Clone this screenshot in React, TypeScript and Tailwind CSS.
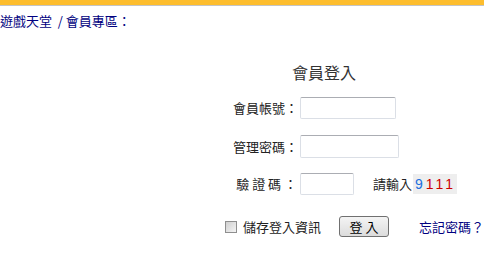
import React from "react";

const inputCls =
  "h-[22px] border border-[#dbdfe6] border-t-[#abadb3] rounded-[2px] bg-white";

export default function App() {
  return (
    <div className="w-[484px] h-[267px] bg-white overflow-hidden font-['Noto_Sans_CJK_TC','Noto_Sans_CJK_SC',sans-serif] text-[13px] text-[#222]">
      <div className="h-[5px] bg-[#fdbd2d]" />
      <div className="h-px bg-[#c4c4c4]" />
      <div className="mt-[7px] leading-[16px] text-[#000080] whitespace-pre">遊戲天堂  / 會員專區：</div>

      <div className="mt-[33px] ml-[292px] text-[16px] leading-[20px] text-[#333]">會員登入</div>

      <div className="mt-[15px] flex items-center">
        <div className="w-[298px] text-right leading-[16px]">會員帳號：</div>
        <div className={`ml-[2px] w-[96px] ${inputCls}`} />
      </div>

      <div className="mt-[16px] flex items-center">
        <div className="w-[298px] text-right leading-[16px]">管理密碼：</div>
        <div className={`ml-[2px] w-[99px] h-[23px] border border-[#dbdfe6] border-t-[#abadb3] rounded-[2px] bg-white`} />
      </div>

      <div className="mt-[15px] flex items-center">
        <div className="w-[297px] text-right leading-[16px] whitespace-pre">驗 證 碼 ：</div>
        <div className={`ml-[3px] w-[54px] ${inputCls}`} />
        <div className="ml-[19px] flex items-center leading-[16px]">
          <span>請輸入</span>
          <span className="ml-[1px] pl-[2px] pr-[1px] bg-[#eeeeee] leading-[20px] font-['Liberation_Sans',sans-serif] text-[14px] tracking-[3px]">
            <span className="text-[#1a6fe0]">9</span>
            <span className="text-[#cc0000]">111</span>
          </span>
        </div>
      </div>

      <div className="mt-[21px] flex items-center">
        <div className="ml-[225px] w-[12px] h-[12px] border border-[#8f8f8f] bg-gradient-to-br from-[#d0d0d0] to-[#f4f4f4]" />
        <div className="ml-[6px] leading-[16px]">儲存登入資訊</div>
        <button className="ml-[18px] w-[50px] h-[21px] border border-[#707070] rounded-[3px] bg-gradient-to-b from-[#f4f4f4] to-[#dcdcdc] text-[13px] leading-[16px] text-black whitespace-pre">
          登 入
        </button>
        <a className="ml-[30px] leading-[16px] text-[#000080]">忘記密碼？</a>
      </div>
    </div>
  );
}
